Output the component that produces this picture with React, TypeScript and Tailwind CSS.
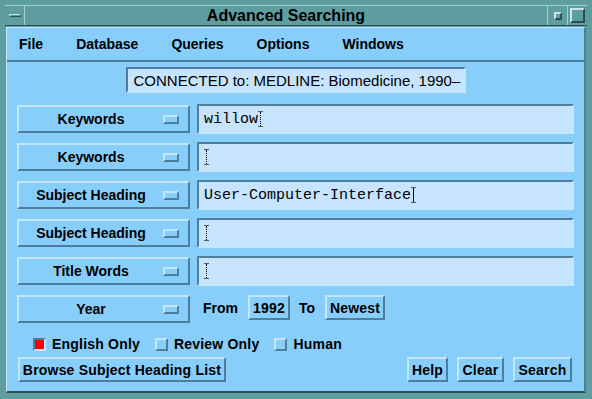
import React from "react";

const raised =
  "border-2 border-t-[#c4e7fd] border-l-[#c4e7fd] border-b-[#4f7d9c] border-r-[#4f7d9c]";
const sunken =
  "border-2 border-t-[#4f7d9c] border-l-[#4f7d9c] border-b-[#c4e7fd] border-r-[#c4e7fd]";

function OptionButton({ label }: { label: string }) {
  return (
    <div className={`w-[173px] h-[28px] flex items-center bg-[#87cefa] ${raised}`}>
      <span className="flex-1 text-center font-bold text-[14px] leading-none">{label}</span>
      <span className="w-[16px] h-[9px] mr-[9px] border-2 border-t-[#c4e7fd] border-l-[#c4e7fd] border-b-[#4f7d9c] border-r-[#4f7d9c]" />
    </div>
  );
}

function Cursor({ active }: { active?: boolean }) {
  return (
    <span className="relative inline-block w-[5px] h-[16px] align-middle">
      <span className={`absolute left-[2px] top-[1px] bottom-[1px] w-px ${active ? "bg-black" : "border-l border-dotted border-black"}`} />
      <span className="absolute left-0 top-0 w-[5px] h-px bg-black opacity-60" />
      <span className="absolute left-0 bottom-0 w-[5px] h-px bg-black opacity-60" />
    </span>
  );
}

function Field({ value, active }: { value?: string; active?: boolean }) {
  return (
    <div className={`w-[377px] h-[30px] flex items-center pl-[5px] bg-[#c6e4fd] ${sunken}`}>
      <span className="font-['Liberation_Mono',monospace] text-[15px] leading-none text-black">{value}</span>
      <Cursor active={active} />
    </div>
  );
}

function Btn({ label, w }: { label: string; w: string }) {
  return (
    <div className={`${w} h-[25px] flex items-center justify-center bg-[#87cefa] font-bold text-[14px] leading-none tracking-[0.2px] ${raised}`}>
      {label}
    </div>
  );
}

function Check({ label, on }: { label: string; on?: boolean }) {
  return (
    <div className="flex items-center gap-[6px]">
      <span
        className={`w-[13px] h-[13px] border-2 ${
          on
            ? "bg-[#ff0000] border-t-[#4f7d9c] border-l-[#4f7d9c] border-b-[#c4e7fd] border-r-[#c4e7fd]"
            : "bg-[#87cefa] border-t-[#c4e7fd] border-l-[#c4e7fd] border-b-[#4f7d9c] border-r-[#4f7d9c]"
        }`}
      />
      <span className="font-bold text-[14px] leading-none tracking-[0.2px]">{label}</span>
    </div>
  );
}

export default function App() {
  const rows: [string, string, boolean][] = [
    ["Keywords", "willow", false],
    ["Keywords", "", false],
    ["Subject Heading", "User-Computer-Interface", true],
    ["Subject Heading", "", false],
    ["Title Words", "", false],
  ];

  return (
    <div className="w-[592px] h-[399px] bg-[#5f9ea0] flex flex-col overflow-hidden font-['Liberation_Sans',Arial,sans-serif] text-black">
      {/* window manager title bar */}
      <div className="mt-[5px] mx-[5px] h-[21px] flex border-t border-b border-t-[#a6d0d1] border-b-[#2f4f4f]">
        <div className="w-[20px] flex items-center justify-center border-r border-r-[#a6d0d1]">
          <span className="w-[12px] h-[3px] bg-[#5f9ea0] border-t border-l border-b border-r border-t-[#c8e4e4] border-l-[#c8e4e4] border-b-[#2f4f4f] border-r-[#2f4f4f]" />
        </div>
        <div className="flex-1 flex items-center justify-center font-bold text-[16px] leading-none">
          Advanced Searching
        </div>
        <div className="w-[20px] flex items-center justify-center border-l border-l-[#a6d0d1]">
          <span className="w-[8px] h-[8px] border-2 border-t-[#c8e4e4] border-l-[#c8e4e4] border-b-[#2f4f4f] border-r-[#2f4f4f]" />
        </div>
        <div className="w-[20px] flex items-center justify-center border-l border-l-[#a6d0d1]">
          <span className="w-[15px] h-[15px] border-2 border-t-[#c8e4e4] border-l-[#c8e4e4] border-b-[#2f4f4f] border-r-[#2f4f4f]" />
        </div>
      </div>

      {/* client area */}
      <div className="mt-[1px] ml-[6px] w-[580px] h-[366px] bg-[#87cefa] flex flex-col border-t border-l border-b-2 border-r-2 border-t-[#c4e7fd] border-l-[#c4e7fd] border-b-[#2f4f4f] border-r-[#4f7d9c]">
        <div className="h-[34px] flex items-center gap-[33px] pl-[12px] border-b-2 border-b-[#4f7d9c] font-bold text-[14px] leading-none">
          <span>File</span>
          <span>Database</span>
          <span>Queries</span>
          <span>Options</span>
          <span>Windows</span>
        </div>

        <div className={`mt-[5px] self-center w-[340px] h-[26px] flex items-center pl-[6px] bg-[#c6e4fd] ${sunken} text-[15px] leading-none`}>
          CONNECTED to: MEDLINE: Biomedicine, 1990–
        </div>

        <div className="mt-[11px] pl-[10px] flex flex-col gap-[8px]">
          {rows.map(([label, value, active], i) => (
            <div key={i} className="h-[30px] flex items-center gap-[7px]">
              <OptionButton label={label} />
              <Field value={value} active={active} />
            </div>
          ))}
          <div className="h-[30px] flex items-center">
            <OptionButton label="Year" />
            <span className="ml-[13px] -mt-[2px] font-bold text-[14px] leading-none">From</span>
            <div className="ml-[10px] -mt-[3px]">
              <Btn label="1992" w="w-[42px]" />
            </div>
            <span className="ml-[9px] -mt-[2px] font-bold text-[14px] leading-none">To</span>
            <div className="ml-[10px] -mt-[3px]">
              <Btn label="Newest" w="w-[60px]" />
            </div>
          </div>
        </div>

        <div className="mt-[12px] pl-[26px] flex items-center gap-[15px] h-[16px]">
          <Check label="English Only" on />
          <Check label="Review Only" />
          <Check label="Human" />
        </div>

        <div className="mt-[5px] pl-[11px] pr-[12px] flex items-center">
          <Btn label="Browse Subject Heading List" w="w-[208px]" />
          <div className="ml-auto flex gap-[9px]">
            <Btn label="Help" w="w-[41px]" />
            <Btn label="Clear" w="w-[47px]" />
            <Btn label="Search" w="w-[59px]" />
          </div>
        </div>
      </div>
    </div>
  );
}
